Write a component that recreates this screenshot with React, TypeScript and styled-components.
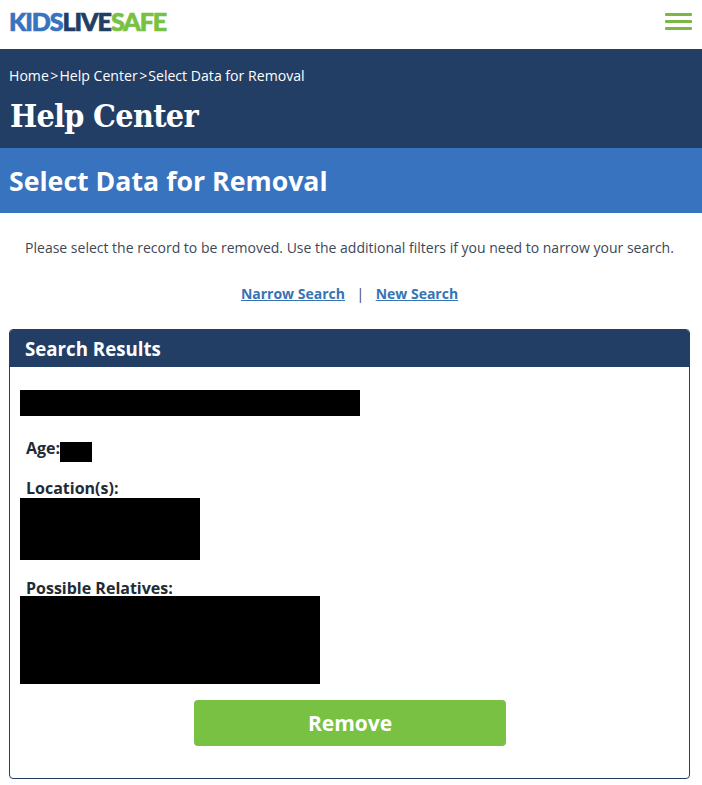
import React from 'react'
import styled, { createGlobalStyle } from 'styled-components'

const GlobalStyle = createGlobalStyle`
  html, body {
    margin: 0;
    padding: 0;
    background: #fff;
  }

  body {
    font-family: 'Open Sans', 'Liberation Sans', sans-serif;
    color: #212b36;
  }

  * {
    box-sizing: border-box;
  }
`

const App = () => {
  return (
    <>
      <GlobalStyle />
      <TopBar>
        <Logo>
          <LogoWord tone='#3873bf'>KIDS</LogoWord>
          <LogoWord tone='#223e64'>LIVE</LogoWord>
          <LogoWord tone='#79c142'>SAFE</LogoWord>
        </Logo>
        <MenuButton aria-label='Menu'>
          <MenuLine />
          <MenuLine />
          <MenuLine />
        </MenuButton>
      </TopBar>

      <HeroBand>
        <Breadcrumbs>
          <span>Home</span>
          <Caret>&gt;</Caret>
          <span>Help Center</span>
          <Caret>&gt;</Caret>
          <span>Select Data for Removal</span>
        </Breadcrumbs>
        <HeroTitle>Help Center</HeroTitle>
      </HeroBand>

      <SubBand>
        <SubTitle>Select Data for Removal</SubTitle>
      </SubBand>

      <Intro>Please select the record to be removed. Use the additional filters if you need to narrow your search.</Intro>

      <LinkRow>
        <TextLink href='#'>Narrow Search</TextLink>
        <Divider>|</Divider>
        <TextLink href='#'>New Search</TextLink>
      </LinkRow>

      <ResultsCard>
        <CardHeader>Search Results</CardHeader>
        <CardBody>
          <Redacted w={340} h={26} />
          <AgeRow>
            <AgeLabel>Age:</AgeLabel>
            <Redacted w={32} h={20} />
          </AgeRow>
          <LocationLabel>Location(s):</LocationLabel>
          <Redacted w={180} h={62} />
          <RelativesLabel>Possible Relatives:</RelativesLabel>
          <Redacted w={300} h={88} />
          <RemoveButton>Remove</RemoveButton>
        </CardBody>
      </ResultsCard>
    </>
  )
}

export default App

const TopBar = styled.header`
  height: 49px;
  padding: 0 10px 6px 10px;
  display: flex;
  align-items: center;
  justify-content: space-between;
`

const Logo = styled.div`
  margin-left: -1px;
  font-family: Lato, 'Open Sans', sans-serif;
  font-size: 25px;
  font-weight: 900;
  letter-spacing: -1.05px;
  line-height: 1;
  -webkit-text-stroke: 0.7px currentColor;
`

const LogoWord = styled.span<{ tone: string }>`
  color: ${(p) => p.tone};
`

const MenuButton = styled.button`
  width: 27px;
  padding: 0;
  border: 0;
  background: none;
  display: flex;
  flex-direction: column;
  gap: 4px;
`

const MenuLine = styled.span`
  display: block;
  height: 3px;
  border-radius: 1px;
  background: #79b844;
`

const HeroBand = styled.section`
  height: 99px;
  padding: 17px 9px 0;
  background: #223e64;
  color: #fff;
`

const Breadcrumbs = styled.nav`
  display: flex;
  font-size: 14.1px;
  line-height: 19px;
`

const Caret = styled.span`
  margin: 0 1px 0 1.5px;
`

const HeroTitle = styled.h1`
  margin: 11px 0 0 1px;
  font-family: 'DejaVu Serif Condensed', 'DejaVu Serif', serif;
  font-size: 32px;
  font-stretch: condensed;
  font-weight: 700;
  line-height: 40px;
  letter-spacing: -0.7px;
`

const SubBand = styled.section`
  height: 65px;
  padding: 0 9px;
  display: flex;
  align-items: center;
  background: #3873bf;
`

const SubTitle = styled.h2`
  margin: 0;
  font-size: 26.7px;
  font-weight: 700;
  color: #fff;
`

const Intro = styled.p`
  margin: 25px 0 0;
  padding-right: 3px;
  font-size: 14px;
  line-height: 20px;
  text-align: center;
  color: #3c4858;
`

const LinkRow = styled.div`
  margin-top: 26px;
  padding-right: 3px;
  display: flex;
  justify-content: center;
  gap: 11.5px;
  font-size: 14px;
  line-height: 20px;
`

const TextLink = styled.a`
  font-weight: 700;
  color: #3873b5;
`

const Divider = styled.span`
  color: #3c4858;
`

const ResultsCard = styled.section`
  margin: 25px 12px 0 9px;
  height: 450px;
  border: 1px solid #223e64;
  border-radius: 4px;
  overflow: hidden;
`

const CardHeader = styled.h3`
  margin: -1px -1px 0;
  height: 38px;
  padding: 0 16px;
  display: flex;
  align-items: center;
  background: #223e64;
  color: #fff;
  font-size: 18.7px;
  font-weight: 700;
`

const CardBody = styled.div`
  padding: 23px 10px 0;
`

const Redacted = styled.div<{ w: number; h: number }>`
  width: ${(p) => p.w}px;
  height: ${(p) => p.h}px;
  background: #000;
`

const AgeRow = styled.div`
  margin-top: 26px;
  padding-left: 6px;
  display: flex;
  align-items: flex-start;
`

const AgeLabel = styled.span`
  font-size: 16px;
  font-weight: 700;
  line-height: 12px;
`

const LocationLabel = styled.div`
  margin-top: 16px;
  padding-left: 6px;
  font-size: 16px;
  font-weight: 700;
  line-height: 20px;
`

const RelativesLabel = styled(LocationLabel)`
  margin-top: 21px;
  line-height: 15px;
`

const RemoveButton = styled.button`
  display: block;
  width: 312px;
  height: 46px;
  margin: 16px 0 0 174px;
  border: 0;
  border-radius: 4px;
  background: #79c142;
  color: #fff;
  font-family: inherit;
  font-size: 21px;
  font-weight: 700;
`
